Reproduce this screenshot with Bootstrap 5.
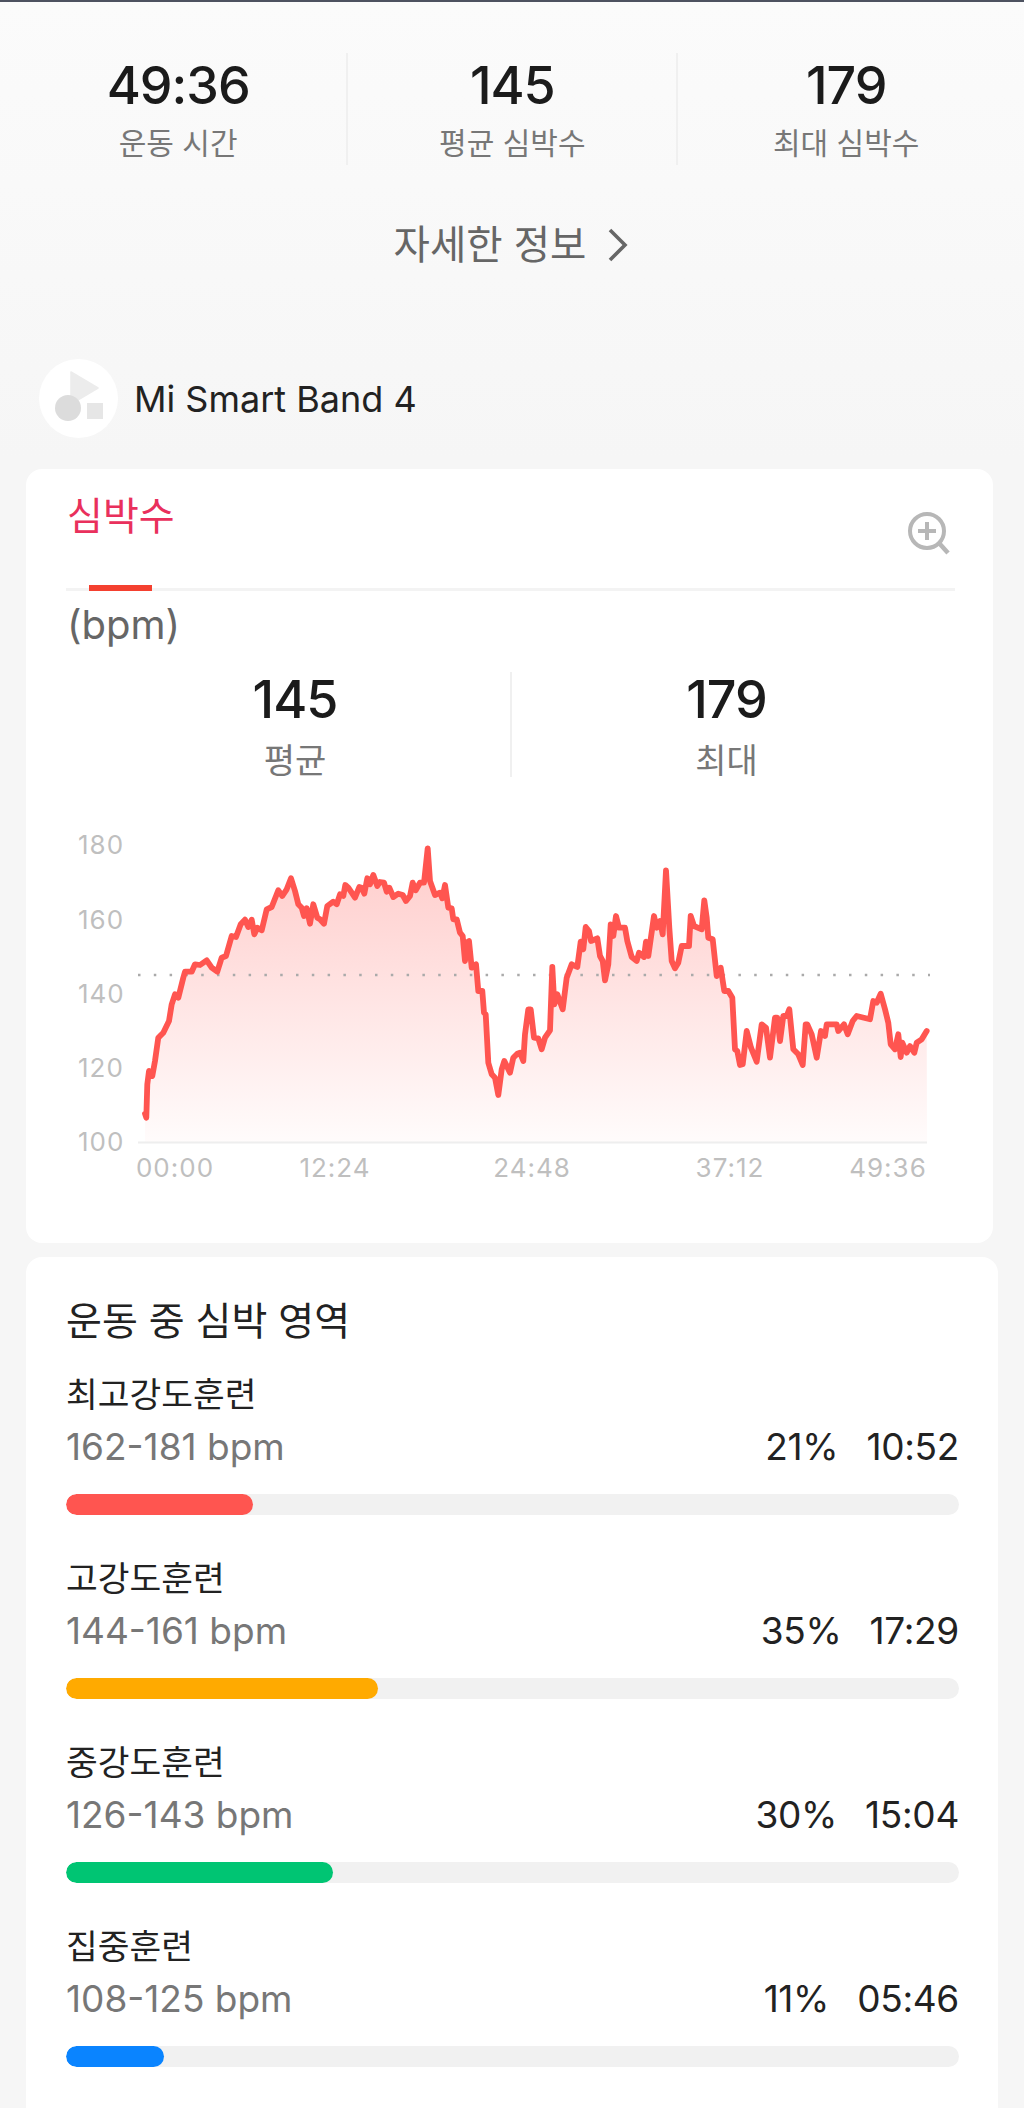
<!DOCTYPE html>
<html lang="ko">
<head>
    <meta charset="UTF-8">
    <title>심박수</title>
    <meta name="viewport" content="width=device-width, initial-scale=1">
    <link rel="stylesheet" href="https://cdn.jsdelivr.net/npm/bootstrap@5.3.3/dist/css/bootstrap.min.css">
    <style>
        html, body {
            height: 2108px;
            overflow: hidden;
        }
        body {
            font-family: Inter, "Noto Sans CJK KR", sans-serif;
            background: linear-gradient(#fbfbfb, #f6f6f6 460px);
            color: #222;
        }

        .top-line { height: 2px; background: #4d5260; }

        /* summary */
        .summary { margin: 51px 10px 0; }
        .summary .stat-cell:nth-child(2) { flex: none; width: 330px; }
        .stat-cell { height: 112px; text-align: center; }
        .stat-cell + .stat-cell { border-left: 2px solid #f0f0f0; }
        .stat-value { font-size: 52px; font-weight: 500; line-height: 56px; letter-spacing: -1px; color: #1b1b1b; }
        .stat-label { font-size: 30px; line-height: 40px; margin-top: 9px; color: #777; }
        .summary .stat-value { margin-top: 5px; }

        .more-link { margin-top: 50px; height: 60px; font-size: 39.5px; line-height: 60px; color: #666; }
        .more-link svg { margin-left: 20px; }

        /* device */
        .device-row { margin: 84px 0 0 39px; height: 79px; font-size: 36px; color: #222; }
        .device-icon { width: 79px; height: 79px; margin-right: 16px; }

        /* cards */
        .sheet { border: 0; border-radius: 16px; background: #fff; }
        .sheet-chart { margin: 31px 31px 0 26px; height: 774px; }
        .sheet-zones { margin: 14px 26px 0 26px; height: 900px; padding: 0 39px 0 40px; }

        .tab-bar { margin: 0 38px 0 40px; height: 122px; border-bottom: 3px solid #f3f3f3; }
        .tab-title { font-size: 39px; line-height: 50px; margin-top: 22px; margin-left: 1px; color: #e9305c; }
        .zoom-btn { margin: 42px 2px 0 0; }
        .tab-mark { position: absolute; left: 23px; bottom: -3px; width: 63px; height: 6px; background: #f4402f; }
        .unit-text { margin: 10px 0 0 41px; font-size: 40px; line-height: 48px; color: #666; }
        .chart-stats { margin: 23px 52px 0 54px; }
        .chart-stats .stat-cell { height: 105px; }
        .chart-stats .stat-label { font-size: 34px; margin-top: 13px; }
        .chart-svg { display: block; margin-top: 44px; }
        .chart-svg text { font-family: Inter, sans-serif; font-size: 26px; letter-spacing: 1px; fill: #bfbfbf; }

        /* zones */
        .zones-title { font-size: 39px; line-height: 52px; padding-top: 38px; color: #222; }
        .zone-row { height: 184px; }
        .zone-name { font-size: 34.5px; line-height: 46px; color: #222; }
        .zone-range { font-size: 37px; line-height: 44px; margin-top: 7px; color: #777; }
        .zone-nums { font-size: 37px; line-height: 44px; margin-top: 7px; color: #222; letter-spacing: -.3px; }
        .zone-time { margin-left: 28px; }
        .zone-track { height: 21px; margin-top: 25px; border-radius: 11px; background: #f1f1f1; }
        .zone-track .progress-bar { border-radius: 11px; }
        .zones-list { margin-top: 25px; }
        .bar-red { background: #ff5550; }
        .bar-amber { background: #ffaa00; }
        .bar-green { background: #00c573; }
        .bar-blue { background: #0a84ff; }
    </style>
</head>
<body>
    <div class="top-line"></div>

    <div class="summary d-flex">
        <div class="stat-cell flex-fill w-100">
            <div class="stat-value">49:36</div>
            <div class="stat-label">운동 시간</div>
        </div>
        <div class="stat-cell">
            <div class="stat-value">145</div>
            <div class="stat-label">평균 심박수</div>
        </div>
        <div class="stat-cell flex-fill w-100">
            <div class="stat-value">179</div>
            <div class="stat-label">최대 심박수</div>
        </div>
    </div>

    <div class="more-link d-flex justify-content-center align-items-center">
        자세한 정보
        <svg width="24" height="36" viewBox="0 0 24 36"><path d="M4 3 L19 18 L4 33" fill="none" stroke="#666" stroke-width="3.6"/></svg>
    </div>

    <div class="device-row d-flex align-items-center">
        <svg class="device-icon" viewBox="0 0 79 79">
            <circle cx="39.5" cy="39.5" r="39.5" fill="#fff"/>
            <path d="M32 13 L59 29 L32 45 Z" fill="#ececec" stroke="#ececec" stroke-width="1.5" stroke-linejoin="round"/>
            <rect x="48" y="44" width="16" height="16" fill="#e6e6e6"/>
            <circle cx="29" cy="49" r="13" fill="#dcdcdc"/>
        </svg>
        <span>Mi Smart Band 4</span>
    </div>

    <div class="card sheet sheet-chart">
        <div class="tab-bar position-relative d-flex justify-content-between">
            <div class="tab-title">심박수</div>
            <svg class="zoom-btn" width="46" height="46" viewBox="0 0 46 46">
                <circle cx="20" cy="20" r="17" fill="none" stroke="#b7b7b7" stroke-width="4"/>
                <path d="M11 20 H29 M20 11 V29" stroke="#b7b7b7" stroke-width="4"/>
                <path d="M32 32 L41 42" stroke="#b7b7b7" stroke-width="4.5"/>
            </svg>
            <div class="tab-mark"></div>
        </div>
        <div class="unit-text">(bpm)</div>
        <div class="chart-stats d-flex">
            <div class="stat-cell w-100">
                <div class="stat-value">145</div>
                <div class="stat-label">평균</div>
            </div>
            <div class="stat-cell w-100">
                <div class="stat-value">179</div>
                <div class="stat-label">최대</div>
            </div>
        </div>
        <svg class="chart-svg" id="chart" width="966" height="370" viewBox="26 820 966 370">
            <defs>
                <linearGradient id="areaFill" x1="0" y1="0" x2="0" y2="1">
                    <stop offset="0" stop-color="#ff5550" stop-opacity=".3"/>
                    <stop offset="1" stop-color="#ff5550" stop-opacity=".02"/>
                </linearGradient>
            </defs>
            <text x="78" y="853">180</text>
            <text x="78" y="928">160</text>
            <text x="78" y="1002">140</text>
            <text x="78" y="1076">120</text>
            <text x="78" y="1150">100</text>
            <path id="area" fill="url(#areaFill)"/>
            <line x1="138" y1="974" x2="930" y2="974" stroke="#aaa" stroke-width="2.5" stroke-dasharray="2.5 13.3"/>
            <line x1="138" y1="1141.5" x2="927" y2="1141.5" stroke="#eee" stroke-width="2"/>
            <path id="curve" fill="none" stroke="#ff5550" stroke-width="5.8" stroke-linejoin="round" stroke-linecap="round"/>
            <text x="175" y="1176" text-anchor="middle">00:00</text>
            <text x="335" y="1176" text-anchor="middle">12:24</text>
            <text x="532" y="1176" text-anchor="middle">24:48</text>
            <text x="730" y="1176" text-anchor="middle">37:12</text>
            <text x="888" y="1176" text-anchor="middle">49:36</text>
        </svg>
    </div>

    <div class="card sheet sheet-zones">
        <div class="zones-title">운동 중 심박 영역</div>
        <div id="zones" class="zones-list"></div>
    </div>

    <script>
        // traced from the chart, in crop units (3 per pixel)
        var partA = [75,878,79,890,82,790,87,750,97,765,105,720,115,650,130,635,147,600,155,550,165,520,175,530,190,470,195,452,215,452,225,430,240,432,260,418,275,440,292,452,305,410,318,405,335,345,348,348,362,310,375,296,385,318,395,296,403,340,412,320,425,328,440,265,455,258,475,208,487,225,500,205,513,172,525,210,535,250,545,260,552,285,560,262,570,308,580,250,592,290,600,295,612,308,622,255,640,242,650,250,660,220,670,225,676,192,685,200,695,215,705,230,718,198,725,200,733,218,742,172,750,190,760,162,772,195,780,183,792,185,800,212,808,200,820,228,835,218,848,222,858,240,870,225,878,185,887,208,900,185,912,185,923,82,930,180,945,222,960,215,967,232,975,192,985,260,995,262,1000,295,1010,295,1020,335,1028,345,1035,420,1040,365,1047,360,1055,440,1068,430,1075,510,1087,510,1092,575,1097,580,1105,725,1115,760,1125,770,1135,822,1145,745,1153,720,1170,755,1180,710,1192,698];
        var partB = [0,695,10,720,15,640,25,565,32,565,42,650,55,652,65,685,75,650,90,628,97,438,103,550,112,520,128,565,140,470,155,430,172,438,182,362,190,385,197,318,207,330,213,360,232,352,240,405,248,420,255,478,265,430,272,310,280,345,288,285,297,320,315,320,322,360,335,408,350,420,357,395,372,408,378,362,385,405,402,285,410,320,420,300,428,340,438,148,448,320,455,420,465,442,475,425,485,375,507,375,512,285,522,315,545,325,553,238,560,290,565,350,578,355,590,465,602,440,613,510,625,510,637,530,645,685,652,690,660,732,668,730,680,630,693,680,710,722,725,610,738,620,750,710,765,590,772,590,780,660,790,585,800,585,808,565,820,685,835,700,848,732,857,610,862,610,875,640,890,710,903,630,915,645,920,610,950,610,955,630,972,610,983,640,998,600,1010,585,1050,595,1060,540,1070,545,1082,518,1095,565,1105,605,1112,670,1125,685,1135,640,1142,708,1147,665,1160,695,1170,675,1183,695,1190,665,1205,655,1220,630];

        var pts = [];
        for (var i = 0; i < partA.length; i += 2) {
            pts.push((120 + partA[i] / 3).toFixed(1) + ' ' + (820 + partA[i + 1] / 3).toFixed(1));
        }
        for (var j = 0; j < partB.length; j += 2) {
            pts.push((520 + partB[j] / 3).toFixed(1) + ' ' + (820 + partB[j + 1] / 3).toFixed(1));
        }
        var line = 'M' + pts.join(' L');
        document.getElementById('curve').setAttribute('d', line);
        document.getElementById('area').setAttribute('d', line + ' L927 1141 L145 1141 Z');

        var zones = [
            { name: '최고강도훈련', range: '162-181 bpm', pct: '21%', time: '10:52', width: 20.9, color: 'bar-red' },
            { name: '고강도훈련', range: '144-161 bpm', pct: '35%', time: '17:29', width: 34.9, color: 'bar-amber' },
            { name: '중강도훈련', range: '126-143 bpm', pct: '30%', time: '15:04', width: 29.9, color: 'bar-green' },
            { name: '집중훈련', range: '108-125 bpm', pct: '11%', time: '05:46', width: 11, color: 'bar-blue' }
        ];
        var html = '';
        zones.forEach(function (z) {
            html += '<div class="zone-row">' +
                '<div class="zone-name">' + z.name + '</div>' +
                '<div class="d-flex justify-content-between">' +
                '<div class="zone-range">' + z.range + '</div>' +
                '<div class="zone-nums"><span>' + z.pct + '</span><span class="zone-time">' + z.time + '</span></div>' +
                '</div>' +
                '<div class="progress zone-track"><div class="progress-bar ' + z.color + '" style="width: ' + z.width + '%"></div></div>' +
                '</div>';
        });
        document.getElementById('zones').innerHTML = html;
    </script>
    <script src="https://cdn.jsdelivr.net/npm/bootstrap@5.3.3/dist/js/bootstrap.bundle.min.js"></script>
</body>
</html>
